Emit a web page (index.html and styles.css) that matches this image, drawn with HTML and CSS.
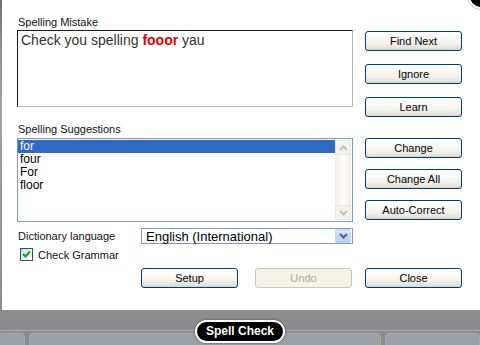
FILE: index.html
```html
<!DOCTYPE html>
<html lang="en">

<head>
    <meta charset="UTF-8">
    <title>Spell Check</title>
    <link rel="stylesheet" href="styles.css">
</head>

<body>
    <div class="screen">
        <div class="dialog">
            <div class="top">
                <div class="main-col">
                    <div class="label label-first">Spelling Mistake</div>
                    <div class="mistake">Check you spelling <b class="wrong">fooor</b> yau</div>

                    <div class="label label-second">Spelling Suggestions</div>
                    <div class="list">
                        <div class="items">
                            <div class="item selected">for</div>
                            <div class="item">four</div>
                            <div class="item">For</div>
                            <div class="item">floor</div>
                        </div>
                        <div class="scrollbar">
                            <div class="scroll-btn">
                                <svg width="9" height="6" viewBox="0 0 9 6"><path d="M1 5 L4.5 1.5 L8 5" fill="none" stroke="#c3c3bb" stroke-width="2"/></svg>
                            </div>
                            <div class="scroll-btn">
                                <svg width="9" height="6" viewBox="0 0 9 6"><path d="M1 1 L4.5 4.5 L8 1" fill="none" stroke="#c3c3bb" stroke-width="2"/></svg>
                            </div>
                        </div>
                    </div>

                    <div class="dict-row">
                        <span class="dict-label">Dictionary language</span>
                        <div class="select">
                            <span>English (International)</span>
                            <div class="select-btn">
                                <svg width="9" height="6" viewBox="0 0 9 6"><path d="M1 1 L4.5 4.5 L8 1" fill="none" stroke="#4d6185" stroke-width="2"/></svg>
                            </div>
                        </div>
                    </div>

                    <div class="check-row">
                        <div class="checkbox">
                            <svg width="11" height="11" viewBox="0 0 11 11"><path d="M2 5 L4.5 7.5 L9 2.5" fill="none" stroke="#21a121" stroke-width="2.2"/></svg>
                        </div>
                        <span>Check Grammar</span>
                    </div>
                </div>

                <div class="side-col">
                    <div class="btn-group group-one">
                        <div class="btn">Find Next</div>
                        <div class="btn">Ignore</div>
                        <div class="btn">Learn</div>
                    </div>
                    <div class="btn-group group-two">
                        <div class="btn">Change</div>
                        <div class="btn">Change All</div>
                        <div class="btn">Auto-Correct</div>
                    </div>
                </div>
            </div>

            <div class="actions">
                <div class="btn">Setup</div>
                <div class="btn disabled">Undo</div>
                <div class="btn">Close</div>
            </div>

            <div class="close-dot"></div>
        </div>

        <div class="taskbar">
            <div class="tabs">
                <div class="tab tab-small"></div>
                <div class="tab tab-wide"></div>
                <div class="tab tab-rest"></div>
            </div>
            <div class="pill">Spell Check</div>
        </div>
    </div>
</body>

</html>
```

FILE: styles.css
```css
* {
    margin: 0;
    padding: 0;
    box-sizing: border-box;
}

body {
    font-family: 'Liberation Sans', Arial, sans-serif;
    background: #8c8c8c;
}

.screen {
    position: relative;
    width: 480px;
    height: 345px;
    overflow: hidden;
    background: linear-gradient(#6f6f6f, #8e8e8e 12%, #a2a2a2 30%, #8a8a8a);
}

.dialog {
    position: relative;
    height: 310px;
    margin-left: 2px;
    padding-left: 15px;
    background: #fff;
    font-size: 11px;
    color: #000;
}

.top {
    display: flex;
    gap: 12px;
}

.main-col {
    width: 336px;
}

.label {
    line-height: 13px;
    padding-left: 1px;
    color: #111;
}

.label-first {
    padding-top: 16px;
}

.label-second {
    margin-top: 16px;
}

/* Feld mit dem falschen Satz */
.mistake {
    margin-top: 1px;
    height: 77px;
    padding: 1px 3px;
    border: 1px solid #1c1c1c;
    border-right-color: #b4b4b4;
    border-bottom-color: #b4b4b4;
    font-size: 14px;
    line-height: 16px;
    color: #333;
}

.wrong {
    color: #e30000;
}

.list {
    display: flex;
    margin-top: 2px;
    height: 84px;
    border: 1px solid #7f9db9;
    padding: 1px 0 1px 0;
}

.items {
    flex: 1;
}

.item {
    height: 13px;
    line-height: 13px;
    padding-left: 2px;
    font-size: 12px;
    color: #000;
}

.item.selected {
    background: #316ac5;
    color: #fff;
}

.scrollbar {
    width: 16px;
    margin-right: 1px;
    display: flex;
    flex-direction: column;
    justify-content: space-between;
    background: linear-gradient(90deg, #f3f1ec, #fdfdfa 60%, #eeede5);
}

.scroll-btn {
    height: 15px;
    display: flex;
    align-items: center;
    justify-content: center;
    border: 1px solid #e8e8e0;
    border-radius: 2px;
    background: #f4f3ee;
}

.dict-row {
    display: flex;
    align-items: center;
    margin-top: 6px;
}

.dict-label {
    width: 124px;
    padding-left: 1px;
    color: #111;
}

.select {
    flex: 1;
    height: 16px;
    display: flex;
    align-items: center;
    justify-content: space-between;
    border: 1px solid #7f9db9;
    padding-left: 4px;
    font-size: 13px;
}

.select-btn {
    width: 16px;
    height: 14px;
    margin-right: 1px;
    display: flex;
    align-items: center;
    justify-content: center;
    border: 1px solid #c3d3fd;
    border-radius: 2px;
    background: linear-gradient(#dbe6fe, #b9cdf9);
}

.check-row {
    display: flex;
    align-items: center;
    gap: 5px;
    margin-top: 4px;
    padding-left: 3px;
    color: #111;
}

.checkbox {
    width: 13px;
    height: 13px;
    display: flex;
    align-items: center;
    justify-content: center;
    border: 1px solid #1c5180;
    background: linear-gradient(135deg, #dcdcd7, #fff);
}

.side-col {
    width: 97px;
}

.btn-group {
    display: flex;
    flex-direction: column;
}

.group-one {
    margin-top: 31px;
    gap: 13px;
}

.group-two {
    margin-top: 21px;
    gap: 11px;
}

/* XP-knappar */
.btn {
    width: 97px;
    height: 20px;
    line-height: 18px;
    text-align: center;
    border: 1px solid #003c74;
    border-radius: 3px;
    background: linear-gradient(#ffffff, #f5f4f0 60%, #e6e3da 90%, #d8d2c4);
    color: #000;
}

.btn.disabled {
    border-color: #c9c7ba;
    background: #f5f4ea;
    color: #aca899;
}

.actions {
    display: flex;
    margin-top: 7px;
    padding-left: 124px;
}

.actions .btn:nth-child(2) {
    margin-left: 17px;
}

.actions .btn:nth-child(3) {
    margin-left: 13px;
}

.close-dot {
    position: absolute;
    top: -17px;
    left: 466px;
    width: 26px;
    height: 26px;
    border-radius: 50%;
    background: #000;
    border: 2px solid #fff;
    box-shadow: 0 0 2px #666;
}

.taskbar {
    position: relative;
    height: 35px;
}

.tabs {
    position: absolute;
    top: 20px;
    left: 0;
    right: 0;
    bottom: 0;
    border-top: 1px solid #a3acb5;
    display: flex;
    gap: 4px;
    padding-top: 2px;
}

.tab {
    height: 20px;
    border: 1px solid #a1aab3;
    border-radius: 4px 4px 0 0;
    background: #9ba0a5;
}

.tab-small {
    width: 27px;
    margin-left: -2px;
}

.tab-wide {
    width: 352px;
}

.tab-rest {
    flex: 1;
}

.pill {
    position: absolute;
    top: 10px;
    left: 195px;
    width: 90px;
    height: 23px;
    line-height: 19px;
    text-align: center;
    border: 2px solid #fff;
    border-radius: 12px;
    background: #000;
    color: #fff;
    font-weight: bold;
    font-size: 12px;
    box-shadow: 0 0 2px #333;
}
```
